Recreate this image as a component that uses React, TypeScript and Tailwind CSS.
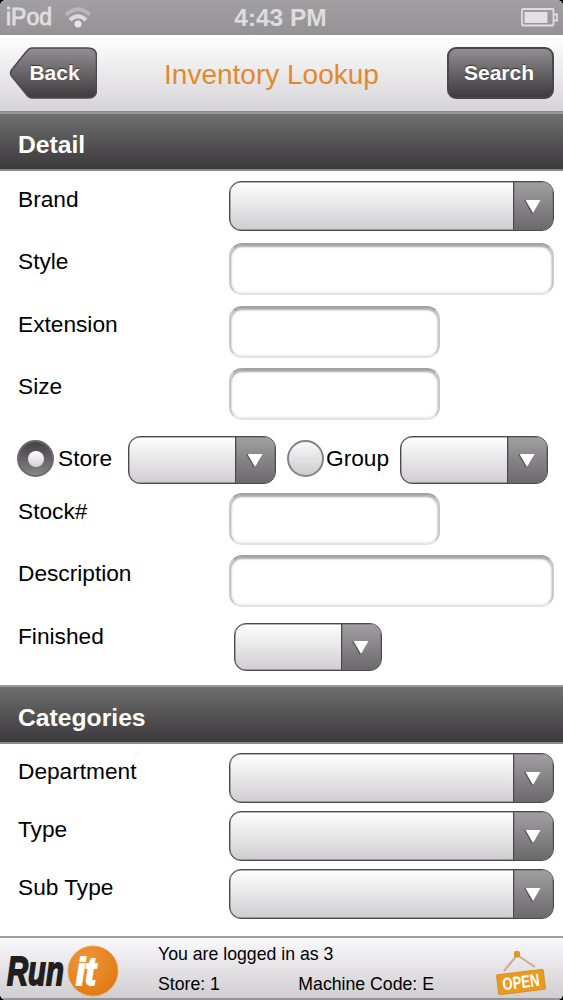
import type { ReactNode } from 'react'
import clsx from 'clsx'

// ─── Form controls ────────────────────────────────────────────────────────────

function Select({ className, label }: { className: string; label: string }) {
  return (
    <button
      type="button"
      aria-label={label}
      className={clsx(
        'flex shrink-0 overflow-hidden rounded-[12px] border border-[#4b494c] bg-linear-to-b from-white to-[#cfcdd0] shadow-[inset_0_0_0_0.5px_#6a686b]',
        className,
      )}
    >
      <span className="flex-1" />
      <span className="flex h-full w-[40px] items-center justify-center border-l border-[#4b494c] bg-linear-to-b from-[#a19fa2] to-[#6b696c] shadow-[inset_0_0_0_0.5px_#6a686b]">
        <svg width="20" height="20" viewBox="0 0 20 20" className="mt-1 mr-[2px]">
          <path d="M1 2 L4 2 L11 14 L9 16 Z" fill="#49474a" opacity=".8" />
          <path d="M2.5 2 H17.5 L10 15 Z" fill="#fff" />
        </svg>
      </span>
    </button>
  )
}

function Field({ className, label }: { className: string; label: string }) {
  return (
    <input
      aria-label={label}
      className={clsx(
        'h-[52px] shrink-0 rounded-[13px] border-x-2 border-t-2 border-b-2 border-x-[#c9c7ca] border-t-[#a3a1a4] border-b-[#e4e2e5] bg-white px-3 shadow-[inset_0_2px_2px_#aaa8ab,inset_0_0_3px_#dddbde] outline-none',
        className,
      )}
    />
  )
}

function Radio({ checked, label }: { checked?: boolean; label: string }) {
  return (
    <span
      role="radio"
      aria-checked={!!checked}
      aria-label={label}
      className={clsx(
        'flex size-[37px] shrink-0 items-center justify-center rounded-full border-2',
        checked
          ? 'border-[#6c6a6d] bg-linear-to-b from-[#444245] to-[#868487]'
          : 'border-[#858386] bg-linear-to-b from-[#fafafa] to-[#cdcbce]',
      )}
    >
      {checked && <span className="size-4 rounded-full bg-linear-to-b from-white to-[#d2d0d3]" />}
    </span>
  )
}

// ─── Layout pieces ────────────────────────────────────────────────────────────

function Row({ label, height, children }: { label: string; height: string; children: ReactNode }) {
  return (
    <div className={clsx('flex items-start pl-[18px]', height)}>
      <span className="w-[211px] shrink-0 pt-[5px]">{label}</span>
      {children}
    </div>
  )
}

function SectionBar({ title }: { title: string }) {
  return (
    <h2 className="flex h-[59px] shrink-0 items-center border-t-2 border-b-2 border-t-[#9b999b] border-b-[#8b898c] bg-linear-to-b from-[#706f6e] to-[#3b393c] pt-[5px] pl-[18px] text-[24.7px] font-bold text-white">
      {title}
    </h2>
  )
}

// ─── Icons ────────────────────────────────────────────────────────────────────

function Wifi() {
  return (
    <svg width="28" height="21" viewBox="0 0 28 21" fill="none">
      <path d="M2 8 Q14 -3.5 26 8" stroke="#b8b6b8" strokeWidth="4" />
      <path d="M6 13 Q14 5.500 22 13" stroke="#dcdadc" strokeWidth="4" />
      <circle cx="14" cy="17" r="3.500" fill="#e6e4e6" />
    </svg>
  )
}

function Battery() {
  return (
    <svg width="38" height="20" viewBox="0 0 38 20" fill="none">
      <rect x="1" y="1" width="31.500" height="16.500" rx="1" stroke="#dedcde" strokeWidth="1.800" />
      <rect x="3.500" y="4" width="23" height="11" fill="#e2e0e2" />
      <path d="M33 6.500 h3 v6 h-3" stroke="#dedcde" strokeWidth="1.800" />
    </svg>
  )
}

function RunItLogo() {
  return (
    <svg width="114" height="54" viewBox="0 0 114 54" role="img" aria-label="Run it" className="mt-[6px] shrink-0 overflow-visible">
      <defs>
        <radialGradient id="ball" cx="35%" cy="30%" r="75%">
          <stop offset="0" stopColor="#f0963a" />
          <stop offset="1" stopColor="#df7a14" />
        </radialGradient>
      </defs>
      <circle cx="88" cy="27" r="25" fill="url(#ball)" stroke="#e9a55a" />
      <g fontFamily="Liberation Sans, Arial, sans-serif" fontWeight="700" fontStyle="italic">
        <text transform="translate(2 41) scale(.73 1)" fontSize="40" fill="#201e21" stroke="#201e21" strokeWidth="1.800">Run</text>
        <text transform="translate(71 41) scale(.86 1)" fontSize="38" fill="#fff" stroke="#fff" strokeWidth="2">it</text>
      </g>
    </svg>
  )
}

function OpenSign() {
  return (
    <svg width="50" height="48" viewBox="0 0 50 48" role="img" aria-label="Open" className="overflow-visible">
      <path d="M8 22 L21 6 L39 18" fill="none" stroke="#cdab8c" strokeWidth="2" />
      <rect x="18" y="2" width="6" height="6.500" rx="2" fill="#e69420" />
      <g transform="rotate(-7 25 33)">
        <rect x="1.500" y="23" width="47" height="20" rx="1.500" fill="#eb9a20" stroke="#d98d22" />
        <text x="6.500" y="39" fontSize="17.500" fontFamily="Liberation Sans, Arial, sans-serif" fontWeight="700" textLength="37" lengthAdjust="spacingAndGlyphs" fill="#fff">OPEN</text>
      </g>
    </svg>
  )
}

// ─── Screen ───────────────────────────────────────────────────────────────────

export default function App() {
  return (
    <div className="bg-black">
      <div className="flex h-[1000px] w-[563px] flex-col overflow-hidden rounded-[6px] bg-white font-['Liberation_Sans',Arial,sans-serif] text-[22.700px] leading-[27px] text-black">
        {/* status bar */}
        <div className="grid h-[35px] shrink-0 grid-cols-3 items-center bg-linear-to-b from-[#a19fa1] to-[#949295] pr-[4px] pl-[6px] text-[#dedcde]">
          <div className="flex items-center gap-[12px]">
            <span className="text-[23px] [-webkit-text-stroke:0.9px_#dedcde]">iPod</span>
            <Wifi />
          </div>
          <span className="-ml-1 text-center text-[24.500px] font-bold whitespace-nowrap">4:43 PM</span>
          <div className="flex justify-end">
            <Battery />
          </div>
        </div>

        {/* title bar */}
        <header className="flex h-[76px] shrink-0 items-center justify-between bg-linear-to-b from-white to-[#d6d4d7] pr-[9px] pl-[9px]">
          <button type="button" className="relative h-[52px] w-[88px] pb-[2px] text-[21px] font-bold text-white">
            <svg width="88" height="52" viewBox="0 0 88 52" className="absolute inset-0">
              <defs>
                <linearGradient id="back" x1="0" y1="0" x2="0" y2="1">
                  <stop offset="0" stopColor="#918f92" />
                  <stop offset="1" stopColor="#3d3b3e" />
                </linearGradient>
              </defs>
              <path
                d="M23 1 H79 Q87.500 1 87.500 9 V43 Q87.500 51 79 51 H23 Q20 51 17 47 L2.500 29 Q.500 26 2.500 23 L17 5 Q20 1 23 1 Z"
                fill="url(#back)"
                stroke="#4b494c"
                strokeWidth="1.500"
              />
            </svg>
            <span className="relative ml-[3px] [text-shadow:0_-1px_1px_#333]">Back</span>
          </button>
          <h1 className="ml-[-1px] pt-[2px] text-[28px] text-[#e2892d]">Inventory Lookup</h1>
          <button
            type="button"
            className="h-[52px] w-[107px] rounded-[9px] border-2 border-[#49474a] bg-linear-to-b from-[#918f92] to-[#3d3b3e] pr-[3px] pb-[2px] text-[21px] font-bold text-white [text-shadow:0_-1px_1px_#333]"
          >
            Search
          </button>
        </header>

        <div className="flex h-[60px] shrink-0 flex-col border-t border-[#8b898c]">
          <SectionBar title="Detail" />
        </div>
        <section className="h-[514px] shrink-0 pt-[10px]">
          <Row label="Brand" height="h-[62px]"><Select label="Brand" className="h-[50px] w-[325px]" /></Row>
          <Row label="Style" height="h-[63px]"><Field label="Style" className="w-[325px]" /></Row>
          <Row label="Extension" height="h-[62px]"><Field label="Extension" className="w-[211px]" /></Row>
          <Row label="Size" height="h-[68px]"><Field label="Size" className="w-[211px]" /></Row>
          <div className="flex h-[57px] items-start pl-[17px]">
            <div className="flex h-[45px] w-[111px] items-center gap-[4px]">
              <Radio label="Store" checked />
              <span>Store</span>
            </div>
            <Select label="Store" className="h-[48px] w-[148px]" />
            <div className="ml-[11px] flex h-[45px] w-[113px] items-center gap-[2px]">
              <Radio label="Group" />
              <span>Group</span>
            </div>
            <Select label="Group" className="h-[48px] w-[148px]" />
          </div>
          <Row label="Stock#" height="h-[62px]"><Field label="Stock#" className="w-[211px]" /></Row>
          <Row label="Description" height="h-[68px]"><Field label="Description" className="w-[325px]" /></Row>
          <div className="flex items-start pl-[18px]">
            <span className="w-[216px]">Finished</span>
            <Select label="Finished" className="h-[48px] w-[148px]" />
          </div>
        </section>

        <SectionBar title="Categories" />
        <section className="flex-1 pt-[9px]">
          <Row label="Department" height="h-[58px]"><Select label="Department" className="h-[50px] w-[325px]" /></Row>
          <Row label="Type" height="h-[58px]"><Select label="Type" className="h-[50px] w-[325px]" /></Row>
          <Row label="Sub Type" height="h-[58px]"><Select label="Sub Type" className="h-[50px] w-[325px]" /></Row>
        </section>

        <footer className="flex h-[64px] shrink-0 items-center border-t-2 border-b-2 border-t-[#a09ea1] border-b-[#969497] bg-linear-to-b from-[#f9f8fa] to-[#d0ced1] pr-[17px] pl-[5px] text-[17.700px] leading-[30px]">
          <RunItLogo />
          <div className="ml-[39px] w-[276px] pt-[2px]">
            <p>You are logged in as 3</p>
            <div className="flex justify-between">
              <span>Store: 1</span>
              <span>Machine Code: E</span>
            </div>
          </div>
          <div className="ml-auto pt-[10px]">
            <OpenSign />
          </div>
        </footer>
      </div>
    </div>
  )
}
